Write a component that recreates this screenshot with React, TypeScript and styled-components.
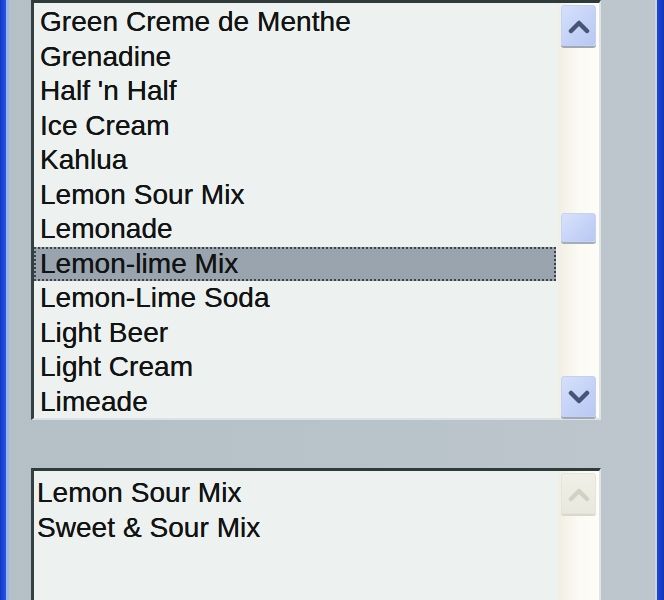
import React from "react";
import styled, { createGlobalStyle } from "styled-components";

const Global = createGlobalStyle`
  html, body { margin: 0; padding: 0; background: #b7c1c8; }
  #root { width: 664px; height: 600px; overflow: hidden; }
`;

const Window = styled.div`
  width: 664px;
  height: 600px;
  display: flex;
  overflow: hidden;
  font-family: "Liberation Sans", Arial, sans-serif;
`;

const FrameLeft = styled.div`
  width: 6px;
  flex: none;
  background: linear-gradient(90deg, #1236c8, #2a55e2);
  border-right: 3px solid #9ab6ef;
`;

const FrameRight = styled.div`
  width: 7px;
  flex: none;
  background: linear-gradient(90deg, #1f48d8, #1234c0);
  border-left: 2px solid #c9d4e6;
`;

const Panel = styled.div`
  flex: 1;
  background: linear-gradient(90deg, #b4bfc6 0%, #b9c3ca 60%, #bdc6cc 100%);
  display: flex;
  flex-direction: column;
  gap: 48px;
  padding-left: 22px;
  padding-right: 54px;
`;

const ListBox = styled.div<{ $height: number }>`
  height: ${(p) => p.$height}px;
  flex: none;
  display: flex;
  box-sizing: border-box;
  background: #edf2f0;
  border-top: 3px solid #2f3b3a;
  border-left: 3px solid #34403f;
  border-right: 2px solid #dfe4e6;
  border-bottom: 2px solid #dde3e4;
`;

const Items = styled.div<{ $top: number }>`
  flex: 1;
  padding-top: ${(p) => p.$top}px;
  display: flex;
  flex-direction: column;
`;

const Row = styled.div<{ $selected?: boolean; $indent: number }>`
  height: 34.5px;
  flex: none;
  box-sizing: border-box;
  display: flex;
  align-items: center;
  padding-left: ${(p) => p.$indent}px;
  margin-right: 2px;
  font-size: 28px;
  color: #121414;
  white-space: nowrap;
  letter-spacing: 0.05px;
  text-shadow: 0 0 0.4px #121414;
  background: ${(p) => (p.$selected ? "#9aa4ae" : "transparent")};
  outline: ${(p) => (p.$selected ? "2px dotted #3c4446" : "none")};
  outline-offset: -2px;
`;

const ScrollBar = styled.div`
  width: 41px;
  flex: none;
  display: flex;
  flex-direction: column;
  align-items: center;
  padding-top: 2px;
  padding-bottom: 1px;
  box-sizing: border-box;
  background: linear-gradient(90deg, #f1efe4 0%, #fbfaf3 50%, #fdfcf7 100%);
`;

const ArrowButton = styled.div<{ $disabled?: boolean }>`
  width: 35px;
  height: 41px;
  flex: none;
  box-sizing: border-box;
  border-radius: 3px;
  display: flex;
  align-items: center;
  justify-content: center;
  background: ${(p) =>
    p.$disabled
      ? "linear-gradient(180deg, #f1f0e8, #e9e8de)"
      : "linear-gradient(135deg, #d6e0fb 0%, #c3d1f6 60%, #b8c8f2 100%)"};
  border: 1px solid ${(p) => (p.$disabled ? "#e6e4d8" : "#c3d0f2")};
  box-shadow: ${(p) =>
    p.$disabled ? "0 2px 0 #d8d8cf" : "0 2px 0 #9ea9b8"};
`;

const Track = styled.div`
  flex: 1;
  width: 100%;
  position: relative;
`;

const Thumb = styled.div`
  position: absolute;
  left: 3px;
  width: 35px;
  height: 29px;
  box-sizing: border-box;
  border-radius: 3px;
  background: linear-gradient(135deg, #d9e2fc 0%, #c4d2f7 60%, #b9c8f2 100%);
  border: 1px solid #c6d2f1;
  box-shadow: 0 2px 0 #a3adbc;
`;

const Chevron: React.FC<{ dir: "up" | "down"; disabled?: boolean }> = ({
  dir,
  disabled,
}) => (
  <svg width="22" height="16" viewBox="0 0 22 16">
    <path
      d={dir === "up" ? "M3 13 L11 5 L19 13" : "M3 4 L11 12 L19 4"}
      fill="none"
      stroke={disabled ? "#d2d1c6" : "#465577"}
      strokeWidth="4.5"
      strokeLinecap="round"
      strokeLinejoin="round"
    />
  </svg>
);

const topItems = [
  "Green Creme de Menthe",
  "Grenadine",
  "Half 'n Half",
  "Ice Cream",
  "Kahlua",
  "Lemon Sour Mix",
  "Lemonade",
  "Lemon-lime Mix",
  "Lemon-Lime Soda",
  "Light Beer",
  "Light Cream",
  "Limeade",
];

const bottomItems = ["Lemon Sour Mix", "Sweet & Sour Mix"];

export default function App() {
  const selected = 7;
  const trackHeight = 325;
  const scrollFraction = 0.5;
  const thumbTop = Math.round((trackHeight - 29) * scrollFraction) + 19;
  return (
    <>
      <Global />
      <Window>
        <FrameLeft />
        <Panel>
          <ListBox $height={420}>
            <Items $top={2}>
              {topItems.map((t, i) => (
                <Row key={t} $indent={6} $selected={i === selected}>
                  {t}
                </Row>
              ))}
            </Items>
            <ScrollBar>
              <ArrowButton>
                <Chevron dir="up" />
              </ArrowButton>
              <Track>
                <Thumb style={{ top: thumbTop }} />
              </Track>
              <ArrowButton>
                <Chevron dir="down" />
              </ArrowButton>
            </ScrollBar>
          </ListBox>
          <ListBox $height={180}>
            <Items $top={5}>
              {bottomItems.map((t) => (
                <Row key={t} $indent={3}>
                  {t}
                </Row>
              ))}
            </Items>
            <ScrollBar>
              <ArrowButton $disabled>
                <Chevron dir="up" disabled />
              </ArrowButton>
            </ScrollBar>
          </ListBox>
        </Panel>
        <FrameRight />
      </Window>
    </>
  );
}
